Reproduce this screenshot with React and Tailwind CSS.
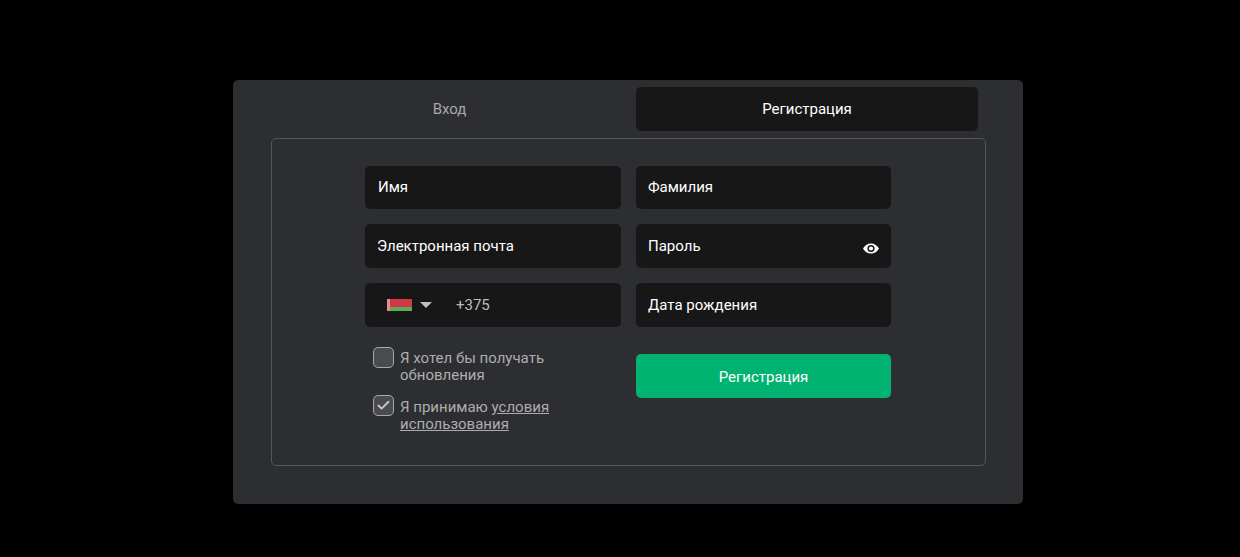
import React from 'react';
import { Check } from 'lucide-react';

const Field = ({ label, children, className = 'h-11 px-3' }) => (
    <div className={`relative rounded-[5px] bg-[#171717] flex items-center text-[15px] text-white ${className}`}>
        {label}
        {children}
    </div>
);

const Eye = () => (
    <svg className="absolute right-[12px] top-[19px]" width="16" height="11" viewBox="0 0 16 11">
        <path fill="#fff" fillRule="evenodd" d="M8 .5C4.6.5 1.6 2.5 0 5.5c1.6 3 4.6 5 8 5s6.4-2 8-5c-1.6-3-4.6-5-8-5zm0 8.6a3.6 3.6 0 1 1 0-7.2 3.6 3.6 0 0 1 0 7.2zM8 3.4a2.1 2.1 0 1 0 0 4.2 2.1 2.1 0 0 0 0-4.2z" />
    </svg>
);

const Box = ({ checked }) => (
    <span className="w-[21px] h-[21px] shrink-0 rounded-[5px] border border-[#a8a8a8] bg-[#4a4b50] flex items-center justify-center">
        {checked && <Check size={15} strokeWidth={3} className="text-[#c8c8c8]" />}
    </span>
);

const App = () => {
    return (
        <div className="w-full h-[557px] bg-black pt-20 font-['Roboto',sans-serif]">
            <div className="ml-[233px] w-[790px] h-[424px] rounded-[5px] bg-[#2d2e32] pt-[7px] pl-[38px]">
                <div className="flex h-11 w-[707px] text-[15px]">
                    <div className="w-[365px] pr-[8px] flex items-center justify-center text-[#a9a9a9]">Вход</div>
                    <div className="flex-1 rounded-[5px] bg-[#171717] flex items-center justify-center text-white">Регистрация</div>
                </div>
                <div className="mt-[7px] w-[715px] h-[328px] rounded-[5px] border border-[#55565a] pt-[27px] pl-[93px]">
                    <div className="grid grid-cols-[256px_255px] gap-[15px]">
                        <Field label="Имя" className="h-[43px] px-[13px]" />
                        <Field label="Фамилия" className="h-[43px] px-3" />
                        <Field label="Электронная почта" />
                        <Field label="Пароль"><Eye /></Field>
                        <div className="h-11 rounded-[5px] bg-[#171717] flex items-center pl-[22px] text-[15px] text-[#bdbdbd]">
                            <span className="w-[25px] h-3 flex">
                                <span className="w-[3px] bg-[#e88a8f]" />
                                <span className="flex-1 flex flex-col">
                                    <span className="h-2 bg-[#cf3a45]" />
                                    <span className="h-1 bg-[#5fab5c]" />
                                </span>
                            </span>
                            <span className="ml-2 w-0 h-0 border-x-[6px] border-x-transparent border-t-[6px] border-t-[#b9c0c6]" />
                            <span className="ml-[24px]">+375</span>
                        </div>
                        <Field label="Дата рождения" />
                        <div className="pl-2 pt-[5px] text-[15px] leading-[17px] text-[#adadad]">
                            <div className="flex gap-[6px]">
                                <Box />
                                <span className="pt-[3px]">Я хотел бы получать<br />обновления</span>
                            </div>
                            <div className="flex gap-[6px] mt-[11px]">
                                <Box checked />
                                <span className="pt-1">Я принимаю <u>условия<br />использования</u></span>
                            </div>
                        </div>
                        <div className="pt-3">
                            <button className="w-full h-11 pt-[2px] rounded-[5px] bg-[#00b371] text-white text-[15px]">Регистрация</button>
                        </div>
                    </div>
                </div>
            </div>
        </div>
    );
};

export default App;
